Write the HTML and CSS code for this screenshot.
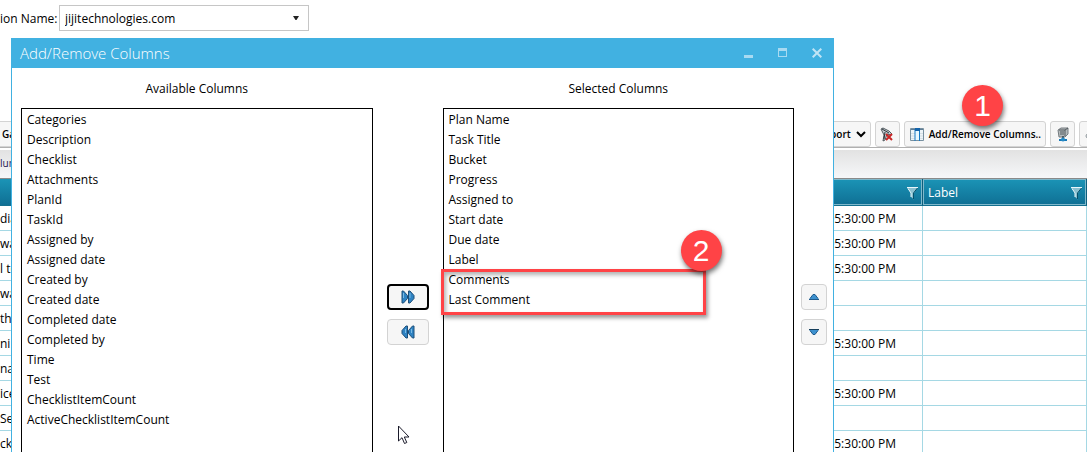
FILE: index.html
```html
<!DOCTYPE html>
<html lang="en">
<head>
<meta charset="utf-8">
<title>Add/Remove Columns</title>
<link rel="stylesheet" href="styles.css">
</head>
<body>
<main class="page">
  <div class="filter-bar">
    <label class="filter-label" for="org">ion Name:</label>
    <div class="combo">
      <select id="org" class="combo-select"><option>jijitechnologies.com</option></select>
      <svg class="combo-arrow" width="8" height="6" viewBox="0 0 8 6"><path d="M1 1h6L4.500 5h-1z" fill="#222"/></svg>
    </div>
  </div>

  <div class="toolbar">
    <button class="tool tool-first" type="button">Ga</button>
    <div class="tool-group">
      <button class="tool" type="button">Export
        <svg width="10" height="7" viewBox="0 0 10 7"><path d="M1 1l4 4 4-4" fill="none" stroke="#000" stroke-width="2"/></svg>
      </button>
      <button class="tool tool-icon" type="button" aria-label="Clear filter">
        <svg width="14" height="15" viewBox="0 0 14 15"><path d="M1 2L3 1 9 4 12 7 11 8 7 7 5 13 3 14 4 8z" fill="#c3cdd2" stroke="#535b60"/><path d="M2 2l7 4M5 5l-1 7" stroke="#2d3439" fill="none"/><path d="M6 7l6 6M12 7l-6 6" stroke="#c92525" stroke-width="2"/></svg>
      </button>
      <div class="tool-anchor">
        <button class="tool" type="button">
          <svg width="14" height="13" viewBox="0 0 14 13"><path d="M.5 .5h13v12H.5z" fill="#edf4f8" stroke="#7890a0"/><path d="M1 1h12v1H1z" fill="#5d7c95"/><path d="M1 5.500h12M1 8h12M1 10.500h12" stroke="#d5dfe5"/><path d="M5 1h5v11H5z" fill="#e6f7ff"/><path d="M5 1v12M9.500 1v12" stroke="#1679c5"/><path d="M5 0h5v3H5z" fill="#1464ab"/></svg>
          <span>Add/Remove Columns..</span>
        </button>
        <span class="callout callout-one">1</span>
      </div>
      <button class="tool tool-icon" type="button" aria-label="Server">
        <svg width="12" height="15" viewBox="0 0 12 15"><path d="M1 3l3-2h7v6l-3 3H2z" fill="#b5babc" stroke="#747b7f"/><path d="M2 3h6v6M8 3l3-2M3 5h4M3 7h4" fill="none" stroke="#50585d"/><path d="M6 9v4" stroke="#505b62" stroke-width="2"/><path d="M2 13h8" stroke="#1778b8" stroke-width="2"/><circle cx="6" cy="12.500" r="2" fill="#278ac5"/></svg>
      </button>
      <button class="tool tool-icon" type="button" aria-label="Cloud">
        <svg width="14" height="14" viewBox="0 0 14 14"><path d="M3 11a2 2 0 0 1 0-4 4 4 0 0 1 7-2 3 3 0 0 1 1 6z" fill="#eee" stroke="#8b9499"/></svg>
      </button>
    </div>
  </div>
  <div class="group-band">lum</div>

  <table class="grid">
    <colgroup><col class="col-task"><col><col class="col-label"></colgroup>
    <thead>
      <tr>
        <th></th>
        <th><div class="head"><span></span><svg width="11" height="13" viewBox="0 0 11 13"><path d="M0 .5h11L7 6v6.500L4 10V6z" fill="#8ac0d0"/><path d="M0 .5h11M1 1.500l3 4.500v4" fill="none" stroke="#e8f7fb"/><path d="M10.500 1L6.500 6v6" fill="none" stroke="#07506a"/></svg></div></th>
        <th><div class="head"><span>Label</span><svg width="11" height="13" viewBox="0 0 11 13"><path d="M0 .5h11L7 6v6.500L4 10V6z" fill="#8ac0d0"/><path d="M0 .5h11M1 1.500l3 4.500v4" fill="none" stroke="#e8f7fb"/><path d="M10.500 1L6.500 6v6" fill="none" stroke="#07506a"/></svg></div></th>
      </tr>
    </thead>
    <tbody>
      <tr><td>dia</td><td class="date">05:30:00 PM</td><td></td></tr>
      <tr><td>wa</td><td class="date">05:30:00 PM</td><td></td></tr>
      <tr><td>l to</td><td class="date">05:30:00 PM</td><td></td></tr>
      <tr><td>wa</td><td></td><td></td></tr>
      <tr><td>th</td><td></td><td></td></tr>
      <tr><td>ni</td><td class="date">05:30:00 PM</td><td></td></tr>
      <tr><td>na</td><td></td><td></td></tr>
      <tr><td>ice</td><td class="date">05:30:00 PM</td><td></td></tr>
      <tr><td>Se</td><td></td><td></td></tr>
      <tr><td>ck</td><td class="date">05:30:00 PM</td><td></td></tr>
    </tbody>
  </table>

  <section class="dialog" role="dialog" aria-labelledby="dialog-title">
    <header class="titlebar">
      <h1 class="title" id="dialog-title">Add/Remove Columns</h1>
      <button class="win" type="button" aria-label="Minimize"><svg width="10" height="10" viewBox="0 0 10 10"><path d="M0 7h9v3H0z" fill="#a8daf1"/></svg></button>
      <button class="win" type="button" aria-label="Maximize"><svg width="10" height="10" viewBox="0 0 10 10"><path d="M0 0h9v9H0zM1 3v5h7V3z" fill="#a8daf1" fill-rule="evenodd"/></svg></button>
      <button class="win" type="button" aria-label="Close"><svg width="10" height="10" viewBox="0 0 10 10"><path d="M.7.7l8.600 8.600M9.300.7L.7 9.300" stroke="#c0e4f5" stroke-width="2"/></svg></button>
    </header>
    <div class="dialog-body">
      <div class="pane">
        <label class="pane-label" for="available">Available Columns</label>
        <select class="list" id="available" multiple size="20">
          <option>Categories</option><option>Description</option><option>Checklist</option><option>Attachments</option><option>PlanId</option><option>TaskId</option><option>Assigned by</option><option>Assigned date</option><option>Created by</option><option>Created date</option><option>Completed date</option><option>Completed by</option><option>Time</option><option>Test</option><option>ChecklistItemCount</option><option>ActiveChecklistItemCount</option>
        </select>
      </div>
      <div class="movers">
        <button class="move move-wide focused" type="button" aria-label="Add"><svg width="14" height="14" viewBox="0 0 14 14"><path d="M1 1h1.500L6.500 5.500v3L2.500 13H1zM7.500 1H9l4 4.500v3L9 13H7.500z" fill="#2f83c3" stroke="#1d4e78"/><path d="M2.500 3v5M9 3v5" stroke="#7bbbe5"/></svg></button>
        <button class="move move-wide" type="button" aria-label="Remove"><svg width="14" height="14" viewBox="0 0 14 14"><path d="M13 1h-1.500L7.500 5.500v3l4 4.500H13zM6.500 1H5L1 5.500v3L5 13h1.500z" fill="#2f83c3" stroke="#1d4e78"/><path d="M10.500 4v4M4.500 4v4" stroke="#7bbbe5"/></svg></button>
      </div>
      <div class="pane">
        <label class="pane-label" for="selected">Selected Columns</label>
        <select class="list" id="selected" multiple size="20">
          <option>Plan Name</option><option>Task Title</option><option>Bucket</option><option>Progress</option><option>Assigned to</option><option>Start date</option><option>Due date</option><option>Label</option><option>Comments</option><option>Last Comment</option>
        </select>
        <div class="highlight"><span class="callout callout-two">2</span></div>
      </div>
      <div class="movers">
        <button class="move" type="button" aria-label="Move up"><svg width="12" height="8" viewBox="0 0 12 8"><path d="M1 6.500L5 1.500h2l4 5z" fill="#3d91cf"/><path d="M1 6.500h10M2 5.500l3-4h2l3 4" fill="none" stroke="#205b8c"/></svg></button>
        <button class="move" type="button" aria-label="Move down"><svg width="12" height="8" viewBox="0 0 12 8"><path d="M1 1.500h10l-4 5H5z" fill="#3d91cf"/><path d="M1 1.500h10" stroke="#163f5c"/><path d="M2 2.500l3 4h2l3-4" fill="none" stroke="#205b8c"/></svg></button>
      </div>
    </div>
    <svg class="cursor" width="13" height="20" viewBox="0 0 13 20"><path d="M1.500 1v15l3.500-3.300 2.500 5.800 2.300-1-2.500-5.500h4.700z" fill="#fff" stroke="#1b1b2b"/></svg>
  </section>
</main>
</body>
</html>
```
FILE: styles.css
```css
* { box-sizing: border-box; }
body { margin: 0; background: #fff; color: #000; font: 12px/16px "Open Sans", "Noto Sans", sans-serif; }
button, select { font: inherit; color: inherit; margin: 0; }
button { display: flex; align-items: center; justify-content: center; padding: 0; }
svg { display: block; flex: none; }
.page { position: relative; height: 100vh; overflow: hidden; }

.filter-bar { display: flex; align-items: center; padding-top: 5px; }
.filter-label { width: 59px; padding-top: 2px; white-space: nowrap; }
.combo { position: relative; width: 250px; }
.combo-select { display: block; width: 100%; height: 26px; padding: 2px 5px 0; border: 1px solid #c6c6c6; border-radius: 0; background: #fff; appearance: none; }
.combo-arrow { position: absolute; right: 9px; top: 10px; pointer-events: none; }

.toolbar { display: flex; justify-content: space-between; margin: 90px -17px 0 -22px; border-bottom: 1px solid #b0b0b0; }
.tool-group { display: flex; gap: 4px; }
.tool { height: 26px; padding: 0 4px 0 5px; gap: 5px; border: 1px solid #d3d3d3; border-radius: 3px; background: #f6f6f6; font-size: 10px; font-weight: 600; white-space: nowrap; }
.tool-first { width: 80px; padding-left: 23px; justify-content: flex-start; }
.tool-icon { width: 25px; padding: 0; }
.tool-anchor { position: relative; }
.group-band { height: 29px; margin-top: 2px; border-bottom: 1px solid #8a8a8a; background: linear-gradient(#e2e2e2, #f6f7f9); color: #1d1350; font-size: 10px; line-height: 26px; }

.grid { width: 100%; border-collapse: separate; border-spacing: 0; table-layout: fixed; }
.col-task { width: 80px; }
.col-label { width: 164px; }
.grid th { height: 27px; padding: 0; border-right: 1px solid #0d5f7d; border-bottom: 1px solid #14708f; background: linear-gradient(#1b94b6, #0f6f94); color: #fff; font-weight: 400; }
.head { display: flex; align-items: center; justify-content: space-between; height: 26px; padding: 2px 3px 0 4px; border: 1px solid #7fb9cc; }
.grid td { height: 25px; padding: 2px 0 0; border-right: 1px solid #a5d8e4; border-bottom: 1px solid #a5d8e4; white-space: nowrap; }
.grid .date { padding-right: 26px; text-align: right; }

.dialog { position: absolute; left: 11px; right: 253px; top: 38px; bottom: -70px; border: 1px solid #41b1e1; border-top: 0; background: #fff; }
.titlebar { display: flex; align-items: center; height: 30px; padding: 0 4px 0 8px; background: #41b1e1; }
.title { flex: 1; margin: 0; color: #fff; font-size: 15px; font-weight: 300; line-height: 30px; }
.win { width: 24px; height: 24px; margin-left: 10px; border: 0; background: none; }
.dialog-body { display: grid; grid-template-columns: 1fr 70px 1fr 39px; height: 454px; padding-left: 9px; }
.pane { position: relative; display: flex; flex-direction: column; min-width: 0; }
.pane-label { flex: none; height: 40px; line-height: 42px; text-align: center; }
.list { flex: 1; width: 100%; padding: 2px 0; border: 1px solid #000; border-radius: 0; outline: 0; background: #fff; overflow: hidden; }
.list option { min-height: 20px; padding: 0 5px; line-height: 20px; }
.movers { display: flex; flex-direction: column; align-items: center; gap: 9px; padding-top: 216px; }
.move { width: 26px; height: 26px; border: 1px solid #d3d3d3; border-radius: 4px; background: #f6f6f6; }
.move-wide { width: 42px; }
.focused { border: 2px solid #000; }

.highlight { position: absolute; left: -2px; top: 201px; width: 265px; height: 46px; border: 3px solid #ff4346; box-shadow: 2px 3px 4px rgba(0, 0, 0, .4), inset 2px 3px 4px rgba(0, 0, 0, .3); }
.callout { position: absolute; width: 41px; height: 41px; border-radius: 50%; background: #ff4346; color: #fff; box-shadow: 1px 3px 5px rgba(0, 0, 0, .55); font: 30px/41px "Liberation Sans", Arial, sans-serif; text-align: center; }
.callout-one { right: 43px; top: -36px; }
.callout-two { right: -19px; top: -42px; }
.cursor { position: absolute; left: 385px; top: 387px; }
```
